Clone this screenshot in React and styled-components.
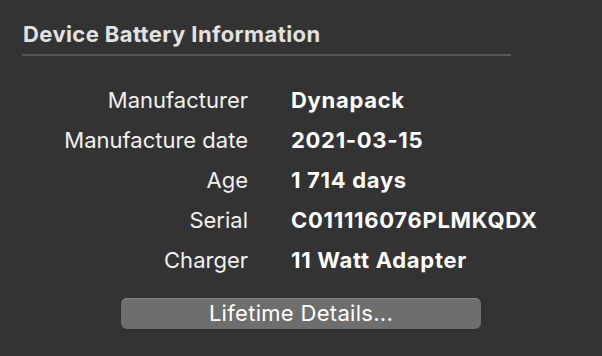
import { Fragment } from 'react';
import { createGlobalStyle, styled } from 'styled-components';

const GlobalStyle = createGlobalStyle`
    html, body {
        margin: 0;
        padding: 0;
        background: #333333;
    }
    body {
        font-family: Inter, 'Noto Sans', sans-serif;
        -webkit-font-smoothing: antialiased;
    }
`;

const Panel = styled.div`
    width: 602px;
    height: 356px;
    background: #333333;
    padding: 21px 0 0 22px;
    box-sizing: border-box;
    display: flex;
    flex-direction: column;
`;

const SectionTitle = styled.h2`
    margin: 0;
    width: 488px;
    padding: 0 0 7px 1px;
    border-bottom: 2px solid #575757;
    font-size: 22px;
    line-height: 26px;
    font-weight: 700;
    color: #e2e2e2;
    letter-spacing: 0.4px;
`;

const InfoGrid = styled.dl`
    margin: 31px 0 0 0;
    display: grid;
    grid-template-columns: 226px auto;
    column-gap: 43px;
    row-gap: 14px;
    font-size: 22px;
    line-height: 26px;
    dt {
        text-align: right;
        color: #f0f0f0;
        font-weight: 400;
    }
    dd {
        margin: 0;
        color: #ffffff;
        font-weight: 700;
        letter-spacing: 0.7px;
    }
`;

const ButtonRow = styled.div`
    display: flex;
    padding-left: 99px;
    margin-top: 25px;
`;

const Button = styled.button`
    width: 360px;
    height: 31px;
    border: none;
    border-radius: 6px;
    background: #6e6e6e;
    box-shadow: inset 0 1px 0 #858585, 0 0 0 0.5px #2a2a2a;
    color: #ffffff;
    font-family: Inter, 'Noto Sans', sans-serif;
    font-size: 22px;
    line-height: 31px;
    letter-spacing: 0.3px;
    padding: 0;
`;

const rows = [
    ['Manufacturer', 'Dynapack'],
    ['Manufacture date', '2021-03-15'],
    ['Age', '1 714 days'],
    ['Serial', 'C011116076PLMKQDX'],
    ['Charger', '11 Watt Adapter'],
];

export default function App() {
    return (
        <>
            <GlobalStyle />
            <Panel>
                <SectionTitle>Device Battery Information</SectionTitle>
                <InfoGrid>
                    {rows.map(([label, value]) => (
                        <Fragment key={label}>
                            <dt>{label}</dt>
                            <dd>{value}</dd>
                        </Fragment>
                    ))}
                </InfoGrid>
                <ButtonRow>
                    <Button>Lifetime Details...</Button>
                </ButtonRow>
            </Panel>
        </>
    );
}
